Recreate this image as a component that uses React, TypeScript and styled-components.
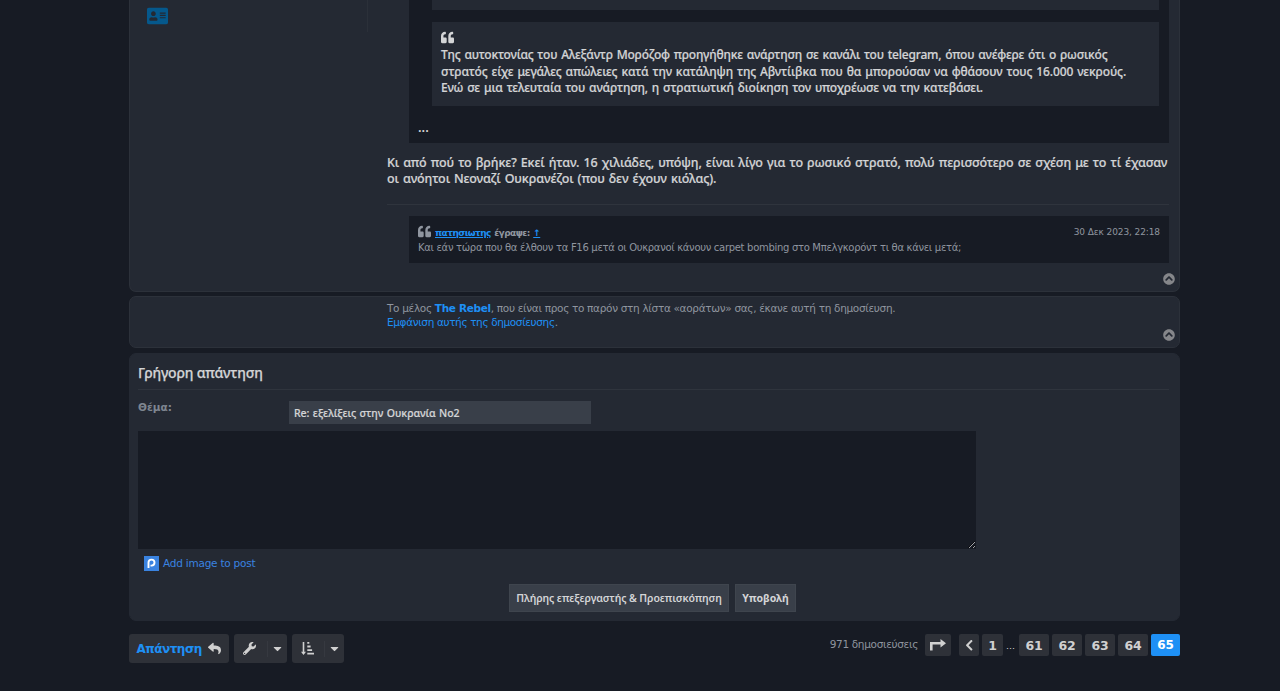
import styled, { createGlobalStyle } from 'styled-components';
import {
  FaAddressCard,
  FaCaretDown,
  FaChevronCircleUp,
  FaChevronLeft,
  FaQuoteLeft,
  FaReply,
  FaWrench,
} from 'react-icons/fa';

const QUOTE_LINES = [
  { text: 'Της αυτοκτονίας του Αλεξάντρ Μορόζοφ προηγήθηκε ανάρτηση σε κανάλι του telegram, όπου ανέφερε ότι ο ρωσικός', spacing: -0.2 },
  { text: 'στρατός είχε μεγάλες απώλειες κατά την κατάληψη της Αβντίιβκα που θα μπορούσαν να φθάσουν τους 16.000 νεκρούς.', spacing: -0.13 },
  { text: 'Ενώ σε μια τελευταία του ανάρτηση, η στρατιωτική διοίκηση τον υποχρέωσε να την κατεβάσει.', spacing: -0.16 },
];

const POST_LINES = [
  { text: 'Κι από πού το βρήκε? Εκεί ήταν. 16 χιλιάδες, υπόψη, είναι λίγο για το ρωσικό στρατό, πολύ περισσότερο σε σχέση με το τί έχασαν', spacing: -0.12 },
  { text: 'οι ανόητοι Νεοναζί Ουκρανέζοι (που δεν έχουν κιόλας).', spacing: -0.12 },
];

const PAGES = ['61', '62', '63', '64'];

export default function App() {
  return (
    <>
      <GlobalStyle />
      <Page>
        <Post>
          <Profile>
            <FaAddressCard />
          </Profile>
          <PostBody>
            <OuterQuote>
              <ClippedQuote />
              <InnerQuote>
                <FaQuoteLeft />
                {QUOTE_LINES.map((line) => (
                  <Line key={line.text} $size={12} $spacing={line.spacing}>
                    {line.text}
                  </Line>
                ))}
              </InnerQuote>
              <Dots>...</Dots>
            </OuterQuote>
            <PostText>
              {POST_LINES.map((line) => (
                <Line key={line.text} $size={12.5} $spacing={line.spacing}>
                  {line.text}
                </Line>
              ))}
            </PostText>
            <Signature>
              <SignatureQuote>
                <QuoteHead>
                  <FaQuoteLeft />
                  <Cite $spacing={-0.55}>
                    <a href="#user">πατησιωτης</a> έγραψε: <a href="#post">↑</a>
                  </Cite>
                  <QuoteDate>30 Δεκ 2023, 22:18</QuoteDate>
                </QuoteHead>
                <SmallLine $size={10} $spacing={-0.3}>
                  Και εάν τώρα που θα έλθουν τα F16 μετά οι Ουκρανοί κάνουν carpet bombing στο Μπελγκορόντ τι θα κάνει μετά;
                </SmallLine>
              </SignatureQuote>
            </Signature>
          </PostBody>
          <BackToTop href="#top">
            <FaChevronCircleUp />
          </BackToTop>
        </Post>

        <IgnoredPost>
          <IgnoredText>
            <SmallLine $size={10.5} $spacing={-0.32}>
              Το μέλος <strong>The Rebel</strong>, που είναι προς το παρόν στη λίστα «αοράτων» σας, έκανε αυτή τη δημοσίευση.
            </SmallLine>
            <SmallLine $size={10.5} $spacing={-0.37}>
              <a href="#show">Εμφάνιση αυτής της δημοσίευσης</a>.
            </SmallLine>
          </IgnoredText>
          <BackToTop href="#top">
            <FaChevronCircleUp />
          </BackToTop>
        </IgnoredPost>

        <ReplyPanel>
          <PanelTitle>Γρήγορη απάντηση</PanelTitle>
          <SubjectRow>
            <SubjectLabel>Θέμα:</SubjectLabel>
            <SubjectInput defaultValue="Re: εξελίξεις στην Ουκρανία Νο2" />
          </SubjectRow>
          <Message />
          <AddImage href="#image">
            <ImageLogo viewBox="0 0 15 15">
              <rect width="15" height="15" fill="#3a83e0" />
              <path d="M4.500 12V6.600a3 3 0 1 1 3 3H6.500" fill="none" stroke="#fff" strokeWidth="1.900" />
            </ImageLogo>
            Add image to post
          </AddImage>
          <Submits>
            <SubmitButton $width={220} $weight={600} $spacing={-0.11}>
              Πλήρης επεξεργαστής &amp; Προεπισκόπηση
            </SubmitButton>
            <SubmitButton $width={61} $weight={700} $spacing={0}>
              Υποβολή
            </SubmitButton>
          </Submits>
        </ReplyPanel>

        <ActionBar>
          <ReplyButton>
            Απάντηση <FaReply />
          </ReplyButton>
          <DropdownButton $width={53}>
            <DropdownIcon>
              <FaWrench />
            </DropdownIcon>
            <DropdownCaret>
              <FaCaretDown />
            </DropdownCaret>
          </DropdownButton>
          <DropdownButton $width={52}>
            <DropdownIcon>
              <svg viewBox="0 0 13 13">
                <path
                  d="M1.700 0h1.600v9.800H5L2.500 13 0 9.800h1.700zM6.300 0h2v1.800h-2zM6.300 3.600h3.300v1.800H6.300zM6.300 7.200h4.800V9H6.300zM6.300 10.800H13v1.800H6.300z"
                  fill="currentColor"
                />
              </svg>
            </DropdownIcon>
            <DropdownCaret>
              <FaCaretDown />
            </DropdownCaret>
          </DropdownButton>
          <Pagination>
            <PostCount>971 δημοσιεύσεις</PostCount>
            <PageJump>
              <svg width="16" height="12" viewBox="0 0 16 12">
                <path d="M0 11.500V3h10.500V0L16 4.300l-5.500 4.300V5.500H2.600v6z" fill="currentColor" />
              </svg>
            </PageJump>
            <PageButton $width={20}>
              <FaChevronLeft />
            </PageButton>
            <PageButton $width={21}>1</PageButton>
            <Ellipsis>…</Ellipsis>
            {PAGES.map((page) => (
              <PageButton key={page} $width={30}>
                {page}
              </PageButton>
            ))}
            <PageButton $width={29} $active>
              65
            </PageButton>
          </Pagination>
        </ActionBar>
      </Page>
    </>
  );
}

const GlobalStyle = createGlobalStyle`
  * {
    box-sizing: border-box;
  }
  body {
    margin: 0;
    background: #171b24;
    color: #8f959f;
    font-family: 'DejaVu Sans', sans-serif;
    font-size: 10.5px;
    overflow: hidden;
  }
  a {
    color: #1e90f5;
    text-decoration: none;
  }
  button, input, textarea {
    margin: 0;
    border: 0;
    padding: 0;
    border-radius: 0;
    font: inherit;
    color: inherit;
  }
  svg {
    display: block;
    flex: none;
  }
`;

const Page = styled.div`
  width: 1051px;
  height: 691px;
  margin-left: 129px;
`;

const Card = styled.div`
  background: #242933;
  border: 1px solid #2c313a;
  border-radius: 7px;
`;

const Post = styled(Card)`
  position: relative;
  display: flex;
  height: 292px;
  border-top: 0;
  border-top-left-radius: 0;
  border-top-right-radius: 0;
`;

const Profile = styled.div`
  width: 238px;
  height: 32px;
  padding: 5px 0 0 17px;
  border-right: 1px solid #2b3039;
  color: #05588c;
  svg {
    width: 21px;
    height: 22px;
  }
`;

const PostBody = styled.div`
  width: 782px;
  margin-left: 19px;
`;

const OuterQuote = styled.div`
  height: 143px;
  margin-left: 22px;
  padding: 0 10px 0 23px;
  background: #171b24;
  color: #d3d4d6;
`;

const ClippedQuote = styled.div`
  height: 10px;
  background: #242933;
`;

const InnerQuote = styled.div`
  height: 84px;
  margin-top: 12px;
  padding: 9px 9px 0;
  background: #242933;
  svg {
    width: 13px;
    height: 13px;
    margin-bottom: 3.4px;
  }
`;

const Line = styled.div<{ $size: number; $spacing: number }>`
  font-family: 'Noto Sans', sans-serif;
  font-size: ${({ $size }) => $size}px;
  font-weight: 500;
  line-height: 16.5px;
  letter-spacing: ${({ $spacing }) => $spacing}px;
  word-spacing: 1px;
  white-space: nowrap;
  -webkit-text-stroke: 0.2px currentColor;
`;

const Dots = styled.div`
  margin: 13px 0 0 -14px;
  font: 600 13px/16px 'Noto Sans', sans-serif;
`;

const PostText = styled.div`
  height: 61px;
  padding-top: 11.5px;
  color: #d3d4d6;
`;

const Signature = styled.div`
  padding-top: 11px;
  border-top: 1px solid #2f343d;
`;

const SignatureQuote = styled.div`
  height: 47px;
  margin-left: 22px;
  padding: 9px 9px 0;
  background: #171b24;
`;

const QuoteHead = styled.div`
  display: flex;
  height: 16px;
  svg {
    width: 13px;
    height: 13px;
    margin-right: 4px;
  }
`;

const Cite = styled.cite<{ $spacing: number }>`
  font-size: 9px;
  font-style: normal;
  font-weight: 700;
  line-height: 16px;
  letter-spacing: ${({ $spacing }) => $spacing}px;
  word-spacing: 0.8px;
  a {
    text-decoration: underline;
  }
`;

const QuoteDate = styled.span`
  margin-left: auto;
  font-size: 9px;
  line-height: 14px;
  letter-spacing: -0.1px;
`;

const SmallLine = styled.div<{ $size: number; $spacing: number }>`
  font-size: ${({ $size }) => $size}px;
  line-height: 14px;
  letter-spacing: ${({ $spacing }) => $spacing}px;
  white-space: nowrap;
  strong {
    color: #1e90f5;
  }
`;

const BackToTop = styled.a`
  position: absolute;
  right: 4px;
  bottom: 6px;
  color: #85868a;
  svg {
    width: 12px;
    height: 12px;
  }
`;

const IgnoredPost = styled(Card)`
  position: relative;
  height: 52px;
  margin-top: 4px;
`;

const IgnoredText = styled.div`
  padding: 4px 0 0 257px;
`;

const ReplyPanel = styled(Card)`
  height: 268px;
  margin-top: 5px;
  padding: 0 10px 0 8px;
  border-color: #242933;
`;

const PanelTitle = styled.h2`
  height: 36px;
  margin: 0 0 11px;
  border-bottom: 1px solid #2f343d;
  color: #d3d4d6;
  font: 500 14px/38px 'Noto Sans', sans-serif;
  letter-spacing: -0.17px;
  -webkit-text-stroke: 0.25px currentColor;
`;

const SubjectRow = styled.div`
  display: flex;
  height: 30px;
`;

const SubjectLabel = styled.label`
  width: 151px;
  line-height: 13px;
  font-weight: 700;
  color: #7e8590;
`;

const SubjectInput = styled.input`
  width: 302px;
  height: 23px;
  padding: 0 5px;
  background: #393f49;
  color: #d3d4d6;
  font: 500 10.5px 'Noto Sans', sans-serif;
  letter-spacing: -0.02px;
  word-spacing: 0.7px;
  -webkit-text-stroke: 0.2px currentColor;
`;

const Message = styled.textarea`
  display: block;
  width: 838px;
  height: 118px;
  background: #171b24;
`;

const AddImage = styled.a`
  display: flex;
  align-items: center;
  gap: 4px;
  height: 15px;
  margin: 7px 0 0 6px;
  padding-bottom: 1px;
  color: #3a83e0;
  letter-spacing: -0.23px;
`;

const ImageLogo = styled.svg`
  width: 15px;
  height: 15px;
`;

const Submits = styled.div`
  display: flex;
  gap: 6px;
  margin: 13px 0 0 371px;
`;

const SubmitButton = styled.button<{ $width: number; $weight: number; $spacing: number }>`
  width: ${({ $width }) => $width}px;
  height: 28px;
  background: #393f49;
  border: 1px solid #3f454e;
  color: #d3d4d6;
  font: ${({ $weight }) => $weight} 10.5px 'Noto Sans', sans-serif;
  letter-spacing: ${({ $spacing }) => $spacing}px;
  white-space: nowrap;
`;

const ActionBar = styled.div`
  display: flex;
  gap: 5px;
  height: 29px;
  margin-top: 13px;
`;

const BarButton = styled.button`
  display: flex;
  align-items: center;
  height: 29px;
  background: #2e3138;
  border-radius: 3px;
  color: #d0d0d0;
`;

const ReplyButton = styled(BarButton)`
  width: 100px;
  gap: 6px;
  padding-left: 7.5px;
  color: #1e90f5;
  font-size: 12px;
  font-weight: 700;
  letter-spacing: -0.5px;
  svg {
    width: 13px;
    height: 13px;
    color: #d0d0d0;
  }
`;

const DropdownButton = styled(BarButton)<{ $width: number }>`
  width: ${({ $width }) => $width}px;
`;

const DropdownIcon = styled.span`
  flex: 1;
  display: flex;
  justify-content: center;
  padding-right: 2px;
  svg {
    width: 13px;
    height: 13px;
  }
`;

const DropdownCaret = styled.span`
  display: flex;
  align-items: center;
  justify-content: center;
  width: 20px;
  height: 16px;
  border-left: 1px solid #363940;
  svg {
    width: 13px;
    height: 13px;
  }
`;

const Pagination = styled.div`
  display: flex;
  gap: 3px;
  margin-left: auto;
`;

const PostCount = styled.span`
  margin-right: 4px;
  line-height: 20px;
  letter-spacing: -0.33px;
`;

const PageButton = styled.button<{ $width: number; $active?: boolean }>`
  display: flex;
  align-items: center;
  justify-content: center;
  width: ${({ $width }) => $width}px;
  height: 22px;
  border-radius: 2px;
  background: ${({ $active }) => ($active ? '#1e90f5' : '#2e3138')};
  color: ${({ $active }) => ($active ? '#ffffff' : '#d0d0d0')};
  font-size: ${({ $active }) => ($active ? 12 : 12.5)}px;
  font-weight: 700;
  letter-spacing: -0.2px;
`;

const PageJump = styled(PageButton).attrs({ $width: 26 })`
  margin-right: 5px;
`;

const Ellipsis = styled.span`
  width: 10px;
  color: #d0d0d0;
  font-size: 9px;
  line-height: 24px;
`;
